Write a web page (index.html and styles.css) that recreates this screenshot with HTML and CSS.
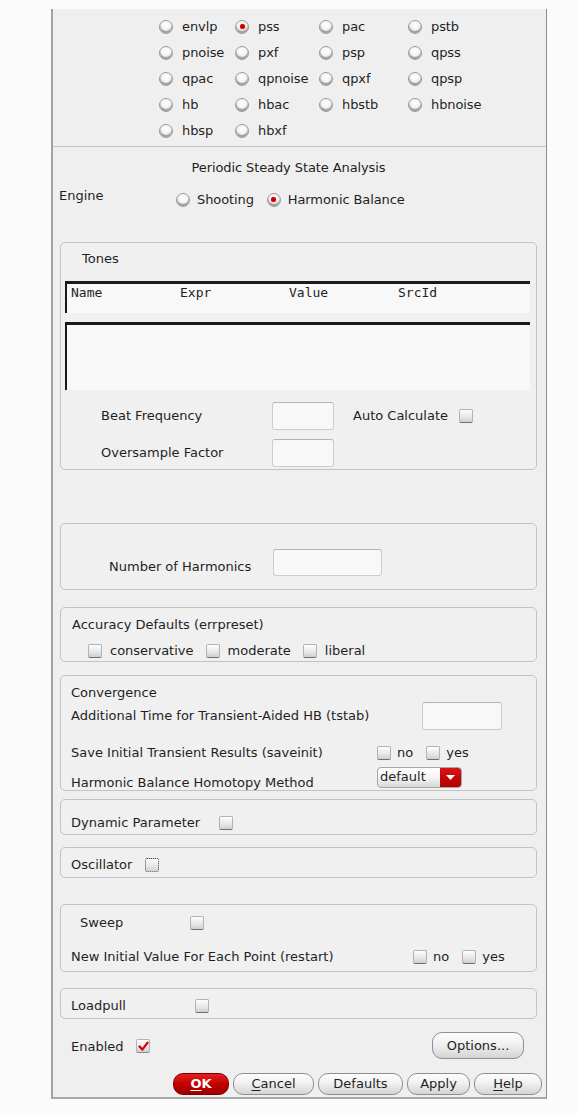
FILE: index.html
```html
<!DOCTYPE html>
<html>
<head>
<meta charset="utf-8">
<link rel="stylesheet" href="styles.css">
</head>
<body>
<div class="panel">
  <div class="analyses">
    <label class="ropt"><span class="radio"></span>envlp</label>
    <label class="ropt"><span class="radio on"></span>pss</label>
    <label class="ropt"><span class="radio"></span>pac</label>
    <label class="ropt"><span class="radio"></span>pstb</label>
    <label class="ropt"><span class="radio"></span>pnoise</label>
    <label class="ropt"><span class="radio"></span>pxf</label>
    <label class="ropt"><span class="radio"></span>psp</label>
    <label class="ropt"><span class="radio"></span>qpss</label>
    <label class="ropt"><span class="radio"></span>qpac</label>
    <label class="ropt"><span class="radio"></span>qpnoise</label>
    <label class="ropt"><span class="radio"></span>qpxf</label>
    <label class="ropt"><span class="radio"></span>qpsp</label>
    <label class="ropt"><span class="radio"></span>hb</label>
    <label class="ropt"><span class="radio"></span>hbac</label>
    <label class="ropt"><span class="radio"></span>hbstb</label>
    <label class="ropt"><span class="radio"></span>hbnoise</label>
    <label class="ropt"><span class="radio"></span>hbsp</label>
    <label class="ropt"><span class="radio"></span>hbxf</label>
  </div>
  <div class="sep"></div>
  <div class="title">Periodic Steady State Analysis</div>
  <div class="engine">
    <span class="engine-label">Engine</span>
    <label class="eopt"><span class="radio"></span>Shooting</label>
    <label class="eopt"><span class="radio on"></span>Harmonic Balance</label>
  </div>

  <div class="group tones">
    <div class="tones-title">Tones</div>
    <div class="thead">
      <span>Name</span><span>Expr</span><span>Value</span><span>SrcId</span>
    </div>
    <div class="tbody"></div>
    <div class="frow first">
      <span class="flabel">Beat Frequency</span>
      <span class="input small"></span>
      <span class="auto">Auto Calculate</span>
      <span class="check"></span>
    </div>
    <div class="frow second">
      <span class="flabel">Oversample Factor</span>
      <span class="input small"></span>
    </div>
  </div>

  <div class="group harm">
    <div class="harm-row">
      <span class="harm-label">Number of Harmonics</span>
      <span class="input wide"></span>
    </div>
  </div>

  <div class="group acc">
    <div class="line">Accuracy Defaults (errpreset)</div>
    <div class="acc-row">
      <label class="copt"><span class="check"></span>conservative</label>
      <label class="copt"><span class="check"></span>moderate</label>
      <label class="copt"><span class="check"></span>liberal</label>
    </div>
  </div>

  <div class="group conv">
    <div class="line">Convergence</div>
    <div class="conv-tstab">
      <span class="conv-label">Additional Time for Transient-Aided HB (tstab)</span>
      <span class="input tstab"></span>
    </div>
    <div class="conv-save">
      <span class="conv-label2">Save Initial Transient Results (saveinit)</span>
      <label class="copt yn"><span class="check"></span>no</label>
      <label class="copt"><span class="check"></span>yes</label>
    </div>
    <div class="conv-homo">
      <span class="conv-label3">Harmonic Balance Homotopy Method</span>
      <span class="combo"><span class="combo-text">default</span><span class="combo-btn"><svg width="9" height="5" viewBox="0 0 9 5"><path d="M0 0 H9 L4.5 5 Z" fill="#fff"/></svg></span></span>
    </div>
  </div>

  <div class="group dyn">
    <div class="row-inline">
      <span class="dyn-label">Dynamic Parameter</span>
      <span class="check"></span>
    </div>
  </div>

  <div class="group osc">
    <div class="row-inline">
      <span class="osc-label">Oscillator</span>
      <span class="check focus"></span>
    </div>
  </div>

  <div class="group sweep">
    <div class="row-inline">
      <span class="sweep-label">Sweep</span>
      <span class="check"></span>
    </div>
    <div class="row-inline restart">
      <span class="restart-label">New Initial Value For Each Point (restart)</span>
      <label class="copt yn"><span class="check"></span>no</label>
      <label class="copt"><span class="check"></span>yes</label>
    </div>
  </div>

  <div class="group loadpull">
    <div class="row-inline">
      <span class="lp-label">Loadpull</span>
      <span class="check"></span>
    </div>
  </div>

  <div class="enabled-row">
    <span class="en-label">Enabled</span>
    <span class="check checked"><svg width="11" height="11" viewBox="0 0 11 11"><path d="M1.5 5.5 L4.3 8.6 L9.6 1.6" fill="none" stroke="#d10000" stroke-width="2.2" stroke-linecap="round" stroke-linejoin="round"/></svg></span>
    <button class="btn options">Options...</button>
  </div>

  <div class="buttons">
    <button class="btn ok"><u>O</u>K</button>
    <button class="btn cancel"><u>C</u>ancel</button>
    <button class="btn defaults">Defaults</button>
    <button class="btn apply">Apply</button>
    <button class="btn help"><u>H</u>elp</button>
  </div>
</div>
</body>
</html>
```
FILE: styles.css
```css
* { box-sizing: border-box; }

body {
  margin: 0;
  background: #fbfbfb;
  font-family: "DejaVu Sans", sans-serif;
  font-size: 13px;
  color: #1f1f1f;
}

.panel {
  margin: 9px 0 0 51px;
  width: 496px;
  background: #efefef;
  border-left: 2px solid #a3a3a3;
  border-right: 1px solid #8e8e8e;
  border-bottom: 2px solid #a8a8a8;
  padding-bottom: 2px;
  display: flex;
  flex-direction: column;
}

/* analysis radio grid */
.analyses {
  padding: 5px 0 2px 106px;
  display: grid;
  grid-template-columns: 76px 84px 89px 1fr;
  grid-auto-rows: 26px;
}

.ropt, .eopt {
  display: flex;
  align-items: center;
  gap: 9px;
  line-height: 16px;
  white-space: nowrap;
  letter-spacing: -0.1px;
}

.radio {
  flex: none;
  width: 14px;
  height: 14px;
  border-radius: 50%;
  border: 1px solid #9a9a9a;
  background: radial-gradient(circle at 50% 35%, #ffffff 0%, #f3f3f3 45%, #c6c6c6 100%);
  box-shadow: inset 0 -2px 1px rgba(0, 0, 0, 0.3);
  position: relative;
}

.radio.on::after {
  content: "";
  position: absolute;
  left: 3.5px;
  top: 3px;
  width: 5px;
  height: 5px;
  border-radius: 50%;
  background: #d00000;
  box-shadow: 0 0 1px #ff4a4a;
}

.sep {
  height: 1px;
  background: #c4c4c4;
}

.title {
  margin-top: 13px;
  line-height: 16px;
  text-align: center;
  padding-right: 22px;
  letter-spacing: -0.1px;
}

.engine {
  margin-top: 12px;
  height: 20px;
  display: flex;
  align-items: flex-start;
  padding-left: 6px;
}

.engine-label {
  width: 117px;
  line-height: 16px;
}

.eopt {
  gap: 7px;
  margin-top: 4px;
  height: 16px;
  margin-right: 13px;
}

/* group boxes */
.group {
  margin: 0 9px 0 7px;
  border: 1px solid #c3c3c3;
  border-radius: 5px;
  background: #f0f0f0;
}

.tones {
  margin-top: 34px;
  height: 228px;
  padding: 7px 6px 0 4px;
}

.tones-title {
  padding-left: 17px;
  line-height: 17px;
}

.thead {
  margin-top: 14px;
  height: 32px;
  border-top: 3px solid #1b1b1b;
  border-left: 2px solid #1b1b1b;
  background: #f8f8f8;
  display: grid;
  grid-template-columns: 109px 109px 109px 109px;
  padding-left: 4px;
  padding-top: 1px;
  font-family: "DejaVu Sans Mono", monospace;
  font-size: 13px;
  line-height: 16px;
}

.tbody {
  margin-top: 9px;
  height: 68px;
  border-top: 3px solid #1b1b1b;
  border-left: 2px solid #1b1b1b;
  background: #f8f8f8;
}

.frow {
  display: flex;
  align-items: center;
  height: 28px;
  padding-left: 36px;
}

.frow.first { margin-top: 12px; }
.frow.second { margin-top: 9px; }

.flabel {
  width: 171px;
  line-height: 16px;
}

.input {
  flex: none;
  display: block;
  background: #f8f8f8;
  border: 1px solid #cdcdcd;
  border-top-color: #b4b4b4;
  border-radius: 3px;
}

.input.small {
  width: 62px;
  height: 28px;
}

.auto {
  margin-left: 19px;
  width: 106px;
  line-height: 16px;
}

.check {
  flex: none;
  display: inline-flex;
  align-items: center;
  justify-content: center;
  width: 14px;
  height: 14px;
  border: 1px solid #b3b3b3;
  border-bottom-color: #6f6f6f;
  border-radius: 2px;
  background: linear-gradient(#fdfdfd, #e6e6e6 60%, #cfcfcf);
}

.check.focus {
  border: 1px dotted #444;
}

.check.checked {
  border-color: #b3b3b3 #b3b3b3 #8a8a8a;
}

.check svg { display: block; }

.harm {
  margin-top: 53px;
  height: 67px;
  padding-top: 25px;
}

.harm-row {
  display: flex;
  align-items: flex-start;
  padding-left: 48px;
}

.harm-label {
  width: 164px;
  margin-top: 10px;
  line-height: 16px;
}

.input.wide {
  width: 109px;
  height: 27px;
}

.line {
  line-height: 17px;
}

.acc {
  margin-top: 17px;
  height: 55px;
  padding: 8px 0 0 11px;
}

.acc-row {
  margin-top: 10px;
  display: flex;
  align-items: center;
  padding-left: 16px;
  height: 16px;
}

.copt {
  display: flex;
  align-items: center;
  gap: 8px;
  margin-right: 12px;
  line-height: 16px;
}

.conv {
  margin-top: 13px;
  height: 116px;
  padding: 8px 0 0 10px;
}

.conv-tstab {
  margin-top: 1px;
  height: 28px;
  display: flex;
  align-items: flex-start;
}

.conv-label {
  width: 351px;
  margin-top: 6px;
  line-height: 16px;
}

.input.tstab {
  width: 80px;
  height: 28px;
}

.conv-save {
  margin-top: 15px;
  height: 16px;
  display: flex;
  align-items: center;
}

.conv-label2 {
  width: 306px;
  line-height: 16px;
}

.copt.yn { margin-right: 13px; }
.conv-save .copt, .restart .copt { gap: 6px; }

.conv-homo {
  margin-top: 6px;
  height: 23px;
  display: flex;
  align-items: flex-start;
}

.conv-label3 {
  width: 306px;
  margin-top: 8px;
  line-height: 16px;
}

.combo {
  flex: none;
  width: 85px;
  height: 21px;
  display: flex;
  border: 1px solid #a5a5a5;
  border-radius: 4px;
  overflow: hidden;
  background: linear-gradient(#ffffff, #f4f4f4 50%, #d9d9d9);
}

.combo-text {
  flex: 1;
  padding-left: 2px;
  line-height: 18px;
}

.combo-btn {
  width: 21px;
  display: flex;
  align-items: center;
  justify-content: center;
  background: linear-gradient(#d81414, #b00000);
}

.row-inline {
  display: flex;
  align-items: center;
  height: 16px;
}

.dyn {
  margin-top: 8px;
  height: 36px;
  padding: 15px 0 0 10px;
}

.dyn-label { width: 148px; line-height: 16px; }

.osc {
  margin-top: 12px;
  height: 31px;
  padding: 9px 0 0 10px;
}

.osc-label { width: 74px; line-height: 16px; }

.sweep {
  margin-top: 26px;
  height: 68px;
  padding: 10px 0 0 10px;
}

.sweep-label { padding-left: 9px; width: 119px; line-height: 16px; }

.restart { margin-top: 18px; }

.restart-label { width: 342px; line-height: 16px; }

.loadpull {
  margin-top: 16px;
  height: 31px;
  padding: 9px 0 0 10px;
}

.lp-label { width: 124px; line-height: 16px; }

.enabled-row {
  margin-top: 13px;
  height: 27px;
  display: flex;
  align-items: flex-start;
  padding-left: 18px;
}

.en-label {
  width: 65px;
  margin-top: 7px;
  line-height: 16px;
}

.enabled-row .check {
  margin-top: 7px;
}

.btn {
  font-family: "DejaVu Sans", sans-serif;
  font-size: 13px;
  color: #1f1f1f;
  border: 1px solid #8f8f8f;
  border-radius: 10px;
  background: linear-gradient(#fdfdfd, #f1f1f1 45%, #d4d4d4);
  padding: 0;
  height: 22px;
  line-height: 20px;
}

.btn u { text-decoration-thickness: 1px; text-underline-offset: 2px; }

.options {
  margin-left: auto;
  margin-right: 22px;
  width: 92px;
  height: 27px;
  border-radius: 10px;
}

.buttons {
  margin-top: 14px;
  height: 22px;
  display: flex;
  justify-content: flex-end;
  gap: 4px;
  padding-right: 4px;
}

.ok {
  width: 56px;
  color: #ffffff;
  font-weight: bold;
  border-color: #7a0000;
  background: linear-gradient(#e62020, #c20000 50%, #a00000);
}

.cancel { width: 81px; }
.defaults { width: 85px; }
.apply { width: 63px; }
.help { width: 68px; }
```
